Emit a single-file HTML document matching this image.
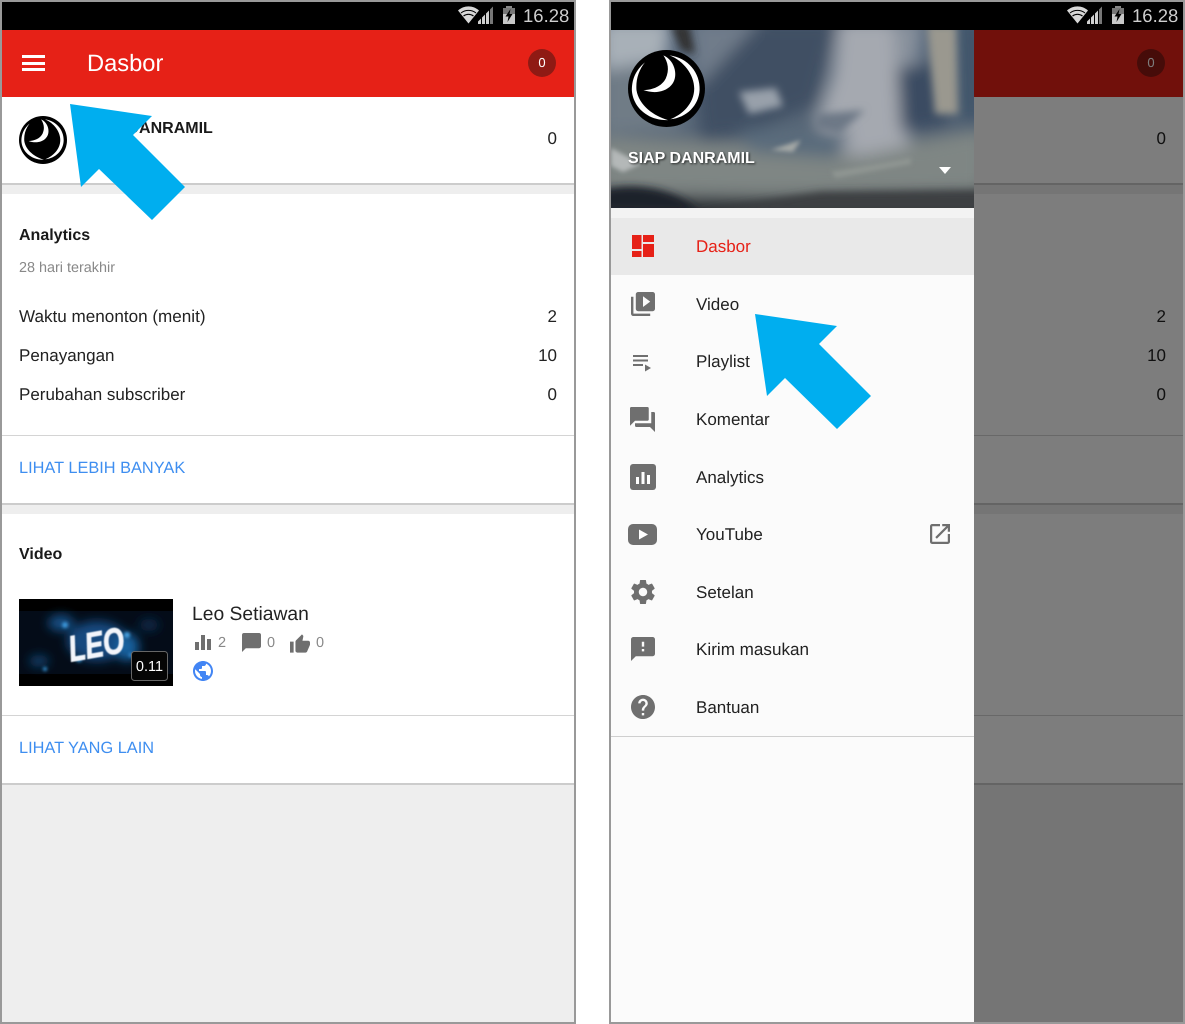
<!DOCTYPE html>
<html><head><meta charset="utf-8">
<style>
html,body{margin:0;padding:0;width:1185px;height:1024px;overflow:hidden;background:#fff;font-family:"Liberation Sans",sans-serif;}
.a{position:absolute}
.t{position:absolute;white-space:nowrap;line-height:20px;font-size:17px;color:#222;text-rendering:geometricPrecision}
.r{text-align:right;width:60px}
.b{font-weight:bold;font-size:16px;color:#1a1a1a}
.lnk{font-size:16.35px;color:#3e8ef0}
.phone{position:absolute;top:0;width:576px;height:1024px;overflow:hidden}
svg{position:absolute;display:block;overflow:visible}
.i{fill:#6f6f6f}
</style></head><body>

<svg width="0" height="0" style="position:absolute"><defs>
<g id="logo">
<circle cx="50" cy="50" r="50" fill="#000"/>
<path d="M54 7C78 10 94 30 93 52C92 72 76 88 55 90C70 84 86 70 86 50C86 32 72 14 54 7Z" fill="#fff"/>
<path d="M22 16C10 26 5 38 5 52C6 74 26 92 52 91C34 86 14 72 11 52C10 38 14 26 22 16Z" fill="#fff"/>
<path d="M46 7C62 14 66 36 56 46C48 55 33 57 20 52C32 52 44 47 49 37C54 26 52 16 46 7Z" fill="#fff"/>
</g>
<g id="forum"><path d="M21 6h-2v9H6v2c0 .55.45 1 1 1h11l4 4V7c0-.55-.45-1-1-1zm-4 6V3c0-.55-.45-1-1-1H3c-.55 0-1 .45-1 1v14l4-4h10c.55 0 1-.45 1-1z"/></g>
<g id="stat">
<path d="M0 4.500C6 -1 15 -1 21 4.500L10.500 17.500Z" fill="#d8d8d8"/>
<path d="M3 7C7.500 3.500 13.500 3.500 18 7" fill="none" stroke="#000" stroke-width="1.100"/>
<path d="M5.500 10C8.500 7.800 12.500 7.800 15.500 10" fill="none" stroke="#000" stroke-width="1.100"/>
<path d="M20 18V15.500L23 12.500V18zM24 18V11.500L27 8.500V18zM28 18V7.500L31 4.500V18z" fill="#d0d0d0"/>
<path d="M32 18V3.500L35 0.500V18z" fill="#777"/>
</g>
<g id="bat"><rect y="2" width="12" height="16" fill="#c8c8c8"/><rect x="3" width="6" height="2" fill="#888"/><rect y="2" width="12" height="6" fill="#777"/><path d="M7.500 3L2.500 10.500H5.500L4.500 16L9.500 8H6.500Z" fill="#000"/></g>
</defs></svg>

<!-- LEFT PHONE -->
<div class="phone" style="left:0">
<div class="a" style="left:0;top:0;width:576px;height:1024px;background:#eee"></div>
<div class="a" style="left:2px;top:2px;width:572px;height:28px;background:#000"></div>
<div class="a" style="left:2px;top:30px;width:572px;height:67px;background:#e62117"></div>
<div class="a" style="left:22px;top:55px;width:23px;height:3px;background:#fff"></div>
<div class="a" style="left:22px;top:62px;width:23px;height:3px;background:#fff"></div>
<div class="a" style="left:22px;top:68px;width:23px;height:3px;background:#fff"></div>
<div class="t" style="left:87px;top:50px;font-size:23.700px;line-height:28px;color:#fff">Dasbor</div>
<div class="a" style="left:528px;top:49px;width:28px;height:28px;border-radius:50%;background:#8f1a14"></div>
<div class="t" style="left:528px;top:53px;width:28px;text-align:center;font-size:13px;color:#fff">0</div>

<div class="a" style="left:2px;top:97px;width:572px;height:86px;background:#fff;border-bottom:2px solid #ccc"></div>
<svg style="left:19px;top:116px" width="48" height="48" viewBox="0 0 100 100"><use href="#logo"/></svg>
<div class="t" style="left:86px;top:119px;font-weight:bold;font-size:16px;color:#1a1a1a">SIAP DANRAMIL</div>
<div class="t r" style="left:497px;top:129px">0</div>

<div class="a" style="left:2px;top:194px;width:572px;height:309px;background:#fff;border-bottom:2px solid #ccc"></div>
<div class="t b" style="left:19px;top:226px">Analytics</div>
<div class="t" style="left:19px;top:258px;font-size:14.400px;color:#888">28 hari terakhir</div>
<div class="t" style="left:19px;top:307px;font-size:17.100px">Waktu menonton (menit)</div>
<div class="t r" style="left:497px;top:307px">2</div>
<div class="t" style="left:19px;top:346px">Penayangan</div>
<div class="t r" style="left:497px;top:346px">10</div>
<div class="t" style="left:19px;top:385px">Perubahan subscriber</div>
<div class="t r" style="left:497px;top:385px">0</div>
<div class="a" style="left:2px;top:435px;width:572px;height:1px;background:#d4d4d4"></div>
<div class="t lnk" style="left:19px;top:458px">LIHAT LEBIH BANYAK</div>

<div class="a" style="left:2px;top:514px;width:572px;height:269px;background:#fff;border-bottom:2px solid #ccc"></div>
<div class="t b" style="left:19px;top:545px">Video</div>
<svg style="left:19px;top:599px;overflow:hidden" width="154" height="87" viewBox="0 0 154 87">
<defs><filter id="nb" x="-50%" y="-50%" width="200%" height="200%"><feGaussianBlur stdDeviation="5"/></filter><filter id="nb2"><feGaussianBlur stdDeviation="1.500"/></filter><filter id="nb3"><feGaussianBlur stdDeviation=".5"/></filter></defs>
<rect width="154" height="87" fill="#000"/>
<rect y="12" width="154" height="63" fill="#040c18"/>
<g filter="url(#nb)"><ellipse cx="78" cy="42" rx="30" ry="20" fill="#12497f"/><ellipse cx="42" cy="24" rx="13" ry="8" fill="#154f85"/><ellipse cx="108" cy="48" rx="12" ry="14" fill="#14609e"/><ellipse cx="130" cy="26" rx="10" ry="6" fill="#0a2c4c"/><ellipse cx="20" cy="62" rx="10" ry="6" fill="#0e3e66"/></g>
<g filter="url(#nb2)"><circle cx="46" cy="26" r="3" fill="#3d9be0"/><circle cx="60" cy="60" r="3" fill="#3d9be0"/><circle cx="108" cy="36" r="3" fill="#4aa6e6"/><circle cx="26" cy="70" r="2" fill="#3d9be0"/><circle cx="112" cy="56" r="2.500" fill="#2f86cc"/></g>
<text x="49" y="58" font-family="Liberation Sans" font-weight="bold" font-style="italic" font-size="36" fill="#f2f5fb" stroke="#f2f5fb" stroke-width="1" textLength="56" lengthAdjust="spacingAndGlyphs" transform="rotate(-10 77 44)" filter="url(#nb3)">LEO</text>
<rect x="112.500" y="52.500" width="36" height="29" rx="3" fill="#050505" stroke="#666" stroke-width="1"/>
</svg>
<div class="t" style="left:131px;top:657px;width:37px;text-align:center;font-size:14.500px;color:#fff">0.11</div>
<div class="t" style="left:192px;top:604px;font-size:19.300px;line-height:22px">Leo Setiawan</div>
<svg class="i" style="left:195px;top:635px" width="16" height="15" viewBox="0 0 16 15"><rect x="0" y="7" width="4" height="8"/><rect x="6" y="0" width="4" height="15"/><rect x="12" y="4" width="4" height="11"/></svg>
<div class="t" style="left:218px;top:633px;font-size:14.500px;color:#888">2</div>
<svg class="i" style="left:242px;top:633px" width="19" height="19" viewBox="2 2 20 20"><path d="M20 2H4c-1.100 0-1.990.9-1.990 2L2 22l4-4h14c1.100 0 2-.9 2-2V4c0-1.100-.9-2-2-2z"/></svg>
<div class="t" style="left:267px;top:633px;font-size:14.500px;color:#888">0</div>
<svg class="i" style="left:290px;top:634px" width="20" height="19" viewBox="1 1 22 20"><path d="M1 21h4V9H1v12zm22-11c0-1.100-.9-2-2-2h-6.310l.95-4.570.03-.32c0-.41-.17-.79-.44-1.060L14.170 1 7.590 7.590C7.220 7.950 7 8.450 7 9v10c0 1.100.9 2 2 2h9c.83 0 1.540-.5 1.840-1.220l3.020-7.050c.09-.23.14-.47.14-.73v-1.910l-.01-.01L23 10z"/></svg>
<div class="t" style="left:316px;top:633px;font-size:14.500px;color:#888">0</div>
<svg style="left:193px;top:661px" width="20" height="20" viewBox="2 2 20 20" fill="#4285f4"><path d="M12 2C6.480 2 2 6.480 2 12s4.480 10 10 10 10-4.480 10-10S17.520 2 12 2zm-1 17.930c-3.950-.49-7-3.850-7-7.930 0-.62.08-1.210.21-1.790L9 15v1c0 1.100.9 2 2 2v1.930zm6.900-2.540c-.26-.81-1-1.390-1.900-1.390h-1v-3c0-.55-.45-1-1-1H8v-2h2c.55 0 1-.45 1-1V7h2c1.100 0 2-.9 2-2v-.41c2.930 1.190 5 4.060 5 7.410 0 2.080-.8 3.970-2.100 5.390z"/></svg>
<div class="a" style="left:2px;top:715px;width:572px;height:1px;background:#d4d4d4"></div>
<div class="t lnk" style="left:19px;top:738px">LIHAT YANG LAIN</div>
<div class="a" style="left:0;top:0;width:572px;height:1020px;border:2px solid #999"></div>
<svg style="left:458px;top:6px" width="38" height="18" viewBox="0 0 38 18"><use href="#stat"/></svg>
<svg style="left:503px;top:6px" width="12" height="18" viewBox="0 0 12 18"><use href="#bat"/></svg>
<div class="t" style="left:523px;top:5px;font-size:18.500px;line-height:22px;color:#cfcfcf">16.28</div>
</div>

<!-- RIGHT PHONE -->
<div class="phone" style="left:609px">
<div class="a" style="left:0;top:0;width:576px;height:1024px;background:#eee"></div>
<div class="a" style="left:2px;top:97px;width:572px;height:86px;background:#fff;border-bottom:2px solid #ccc"></div>
<div class="a" style="left:2px;top:30px;width:572px;height:67px;background:#e62117"></div>
<div class="a" style="left:528px;top:49px;width:28px;height:28px;border-radius:50%;background:#8f1a14"></div>
<div class="t" style="left:528px;top:53px;width:28px;text-align:center;font-size:13px;color:#fff">0</div>
<div class="t r" style="left:497px;top:129px">0</div>
<div class="a" style="left:2px;top:194px;width:572px;height:309px;background:#fff;border-bottom:2px solid #ccc"></div>
<div class="t r" style="left:497px;top:307px">2</div>
<div class="t r" style="left:497px;top:346px">10</div>
<div class="t r" style="left:497px;top:385px">0</div>
<div class="a" style="left:2px;top:435px;width:572px;height:1px;background:#d4d4d4"></div>
<div class="a" style="left:2px;top:514px;width:572px;height:269px;background:#fff;border-bottom:2px solid #ccc"></div>
<div class="a" style="left:2px;top:715px;width:572px;height:1px;background:#d4d4d4"></div>
<div class="a" style="left:0;top:30px;width:576px;height:994px;background:rgba(0,0,0,.51)"></div>
<div class="a" style="left:0;top:0;width:572px;height:1020px;border:2px solid #999"></div>
<div class="a" style="left:2px;top:2px;width:572px;height:28px;background:#000"></div>
<svg style="left:458px;top:6px" width="38" height="18" viewBox="0 0 38 18"><use href="#stat"/></svg>
<svg style="left:503px;top:6px" width="12" height="18" viewBox="0 0 12 18"><use href="#bat"/></svg>
<div class="t" style="left:523px;top:5px;font-size:18.500px;line-height:22px;color:#cfcfcf">16.28</div>
</div>

<!-- DRAWER -->
<div class="a" style="left:611px;top:30px;width:363px;height:992px;background:#fbfbfb"></div>
<svg style="left:611px;top:30px;overflow:hidden" width="363" height="178" viewBox="0 0 363 178">
<defs>
<filter id="b8" x="-30%" y="-30%" width="160%" height="160%"><feGaussianBlur stdDeviation="8"/></filter>
<filter id="b4" x="-30%" y="-30%" width="160%" height="160%"><feGaussianBlur stdDeviation="4"/></filter>
<filter id="b2" x="-30%" y="-30%" width="160%" height="160%"><feGaussianBlur stdDeviation="2"/></filter>
<linearGradient id="bg" x1="0" y1="0" x2="0" y2="1"><stop offset="0" stop-color="#56677c"/><stop offset=".55" stop-color="#586777"/><stop offset=".72" stop-color="#747b7d"/><stop offset=".9" stop-color="#5c6264"/><stop offset="1" stop-color="#303438"/></linearGradient>
</defs>
<rect width="363" height="178" fill="url(#bg)"/>
<g filter="url(#b8)">
<path d="M-10 -10H60L55 32L-10 40Z" fill="#a8b0b8"/>
<path d="M-10 40L60 35L70 100L-10 105Z" fill="#6f7b86"/>
<path d="M80 -10H150L125 45L85 55Z" fill="#6f7b8a"/>
<path d="M150 -10H228L205 75L130 105L90 110L85 60Z" fill="#404f64"/>
<path d="M228 -10H282L292 60L300 125L235 125L205 92L222 45Z" fill="#a5a9b0"/>
<path d="M286 38L332 32L338 95L290 102Z" fill="#3b4c62"/>
<path d="M282 -10H312L306 35L286 38Z" fill="#88919c"/>
<path d="M346 -10H373V92H348Z" fill="#41546a"/>
<path d="M-10 108L125 118L240 128L373 100V160L150 164L-10 160Z" fill="#7f8684"/>
<path d="M130 98L240 102L225 128L140 122Z" fill="#596a7c"/>
</g>
<g filter="url(#b4)">
<path d="M316 -5H345L347 84L324 84Z" fill="#9a988f"/>
<path d="M60 -5H78L84 24L70 20Z" fill="#333"/>
<path d="M128 62L165 58L172 76L138 84Z" fill="#98a0aa"/>
<path d="M206 84L254 80L228 104L204 98Z" fill="#6d7886"/>
<path d="M-10 180V160C30 150 70 162 88 182Z" fill="#1c212a"/>
<path d="M85 182L210 162L373 160V182Z" fill="#3c4043"/>
</g>
<g filter="url(#b2)"><path d="M0 118L30 134L12 142L0 136Z" fill="#b4b8b8"/><path d="M160 120L190 110L182 122Z" fill="#a4a8a6"/><path d="M220 142L300 128L300 134L225 148Z" fill="#8f9592"/></g>
</svg>
<svg style="left:628px;top:50px" width="77" height="77" viewBox="0 0 100 100"><use href="#logo"/></svg>
<div class="t" style="left:628px;top:149px;font-weight:bold;font-size:16px;color:#fff;text-shadow:1px 1px 2px rgba(0,0,0,.7)">SIAP DANRAMIL</div>
<svg style="left:939px;top:167px" width="12" height="7" viewBox="0 0 12 7"><path d="M0 0H12L6 7Z" fill="#fff"/></svg>

<div class="a" style="left:611px;top:208px;width:363px;height:10px;background:#f3f3f3"></div>
<div class="a" style="left:611px;top:218px;width:363px;height:57px;background:#e9e9e9"></div>
<svg style="left:632px;top:235px" width="22" height="22" viewBox="0 0 22 22" fill="#e62117"><rect x="0" y="0" width="9.500" height="14"/><rect x="0" y="16" width="9.500" height="6"/><rect x="11" y="0" width="11" height="7"/><rect x="11" y="9" width="11" height="13"/></svg>
<div class="t" style="left:696px;top:237px;color:#e62117">Dasbor</div>
<svg class="i" style="left:631px;top:292px" width="24" height="24" viewBox="2 2 20 20"><path d="M4 6H2v14c0 1.100.9 2 2 2h14v-2H4V6zm16-4H8c-1.100 0-2 .9-2 2v12c0 1.100.9 2 2 2h12c1.100 0 2-.9 2-2V4c0-1.100-.9-2-2-2zm-8 12.500v-9l6 4.500-6 4.500z"/></svg>
<div class="t" style="left:696px;top:295px">Video</div>
<svg class="i" style="left:633px;top:354px" width="18" height="18" viewBox="0 0 18 18"><rect y="1" width="15" height="2"/><rect y="5.500" width="15" height="2"/><rect y="10" width="10" height="2"/><path d="M12 10.500L18 14L12 17.500Z"/></svg>
<div class="t" style="left:696px;top:352px">Playlist</div>
<svg class="i" style="left:630px;top:407px" width="25" height="25" viewBox="2 2 20 20"><use href="#forum"/></svg>
<div class="t" style="left:696px;top:410px">Komentar</div>
<svg style="left:630px;top:464px" width="26" height="26" viewBox="0 0 26 26"><rect width="26" height="26" rx="3" fill="#6f6f6f"/><rect x="6" y="13" width="3" height="7" fill="#fff"/><rect x="11.500" y="8" width="3" height="12" fill="#fff"/><rect x="17" y="11" width="3" height="9" fill="#fff"/></svg>
<div class="t" style="left:696px;top:468px">Analytics</div>
<svg style="left:628px;top:524px" width="29" height="21" viewBox="0 0 29 21"><rect width="29" height="21" rx="5" fill="#6f6f6f"/><path d="M11 5.500L20 10.500L11 15.500Z" fill="#fff"/></svg>
<div class="t" style="left:696px;top:525px">YouTube</div>
<svg class="i" style="left:930px;top:524px" width="20" height="20" viewBox="3 3 18 18"><path d="M19 19H5V5h7V3H5c-1.110 0-2 .9-2 2v14c0 1.100.89 2 2 2h14c1.100 0 2-.9 2-2v-7h-2v7zM14 3v2h3.590l-9.830 9.830 1.410 1.410L19 6.410V10h2V3h-7z"/></svg>
<svg class="i" style="left:631px;top:580px" width="24" height="24" viewBox="2 2 20 20"><path d="M19.430 12.980c.04-.32.07-.64.07-.98s-.03-.66-.07-.98l2.110-1.650c.19-.15.24-.42.12-.64l-2-3.460c-.12-.22-.39-.3-.61-.22l-2.490 1c-.52-.4-1.080-.73-1.690-.98l-.38-2.650C14.460 2.180 14.250 2 14 2h-4c-.25 0-.46.18-.49.42l-.38 2.650c-.61.25-1.170.59-1.690.98l-2.490-1c-.23-.09-.49 0-.61.22l-2 3.460c-.13.22-.07.49.12.64l2.110 1.650c-.04.32-.07.65-.07.98s.03.66.07.98l-2.110 1.650c-.19.15-.24.42-.12.64l2 3.460c.12.22.39.3.61.22l2.490-1c.52.4 1.080.73 1.690.98l.38 2.650c.03.24.24.42.49.42h4c.25 0 .46-.18.49-.42l.38-2.650c.61-.25 1.170-.59 1.690-.98l2.490 1c.23.09.49 0 .61-.22l2-3.460c.12-.22.07-.49-.12-.64l-2.110-1.650zM12 15.500c-1.930 0-3.500-1.570-3.500-3.500s1.570-3.500 3.500-3.500 3.500 1.570 3.500 3.500-1.570 3.500-3.500 3.500z"/></svg>
<div class="t" style="left:696px;top:583px">Setelan</div>
<svg class="i" style="left:631px;top:637px" width="24" height="24" viewBox="2 2 20 20"><path d="M20 2H4c-1.100 0-1.990.9-1.990 2L2 22l4-4h14c1.100 0 2-.9 2-2V4c0-1.100-.9-2-2-2zm-7 12h-2v-2h2v2zm0-4h-2V6h2v4z"/></svg>
<div class="t" style="left:696px;top:640px;font-size:17.100px">Kirim masukan</div>
<svg class="i" style="left:631px;top:695px" width="24" height="24" viewBox="2 2 20 20"><path d="M12 2C6.480 2 2 6.480 2 12s4.480 10 10 10 10-4.480 10-10S17.520 2 12 2zm1 17h-2v-2h2v2zm2.070-7.750l-.9.92C13.450 12.900 13 13.500 13 15h-2v-.5c0-1.100.45-2.100 1.170-2.830l1.240-1.260c.37-.36.59-.86.59-1.410 0-1.100-.9-2-2-2s-2 .9-2 2H8c0-2.210 1.790-4 4-4s4 1.790 4 4c0 .88-.36 1.680-.93 2.250z"/></svg>
<div class="t" style="left:696px;top:698px">Bantuan</div>
<div class="a" style="left:611px;top:736px;width:363px;height:1px;background:#cfcfcf"></div>

<!-- ARROWS -->
<svg style="left:0;top:0" width="1185" height="1024" viewBox="0 0 1185 1024">
<path d="M70 104L152 116L133 135L185 187L152 220L99 169L81 187Z" fill="#00aeef"/>
<path d="M755 314L837 326L819 344L871 396L837 429L785 378L767 396Z" fill="#00aeef"/>
</svg>
</body></html>
